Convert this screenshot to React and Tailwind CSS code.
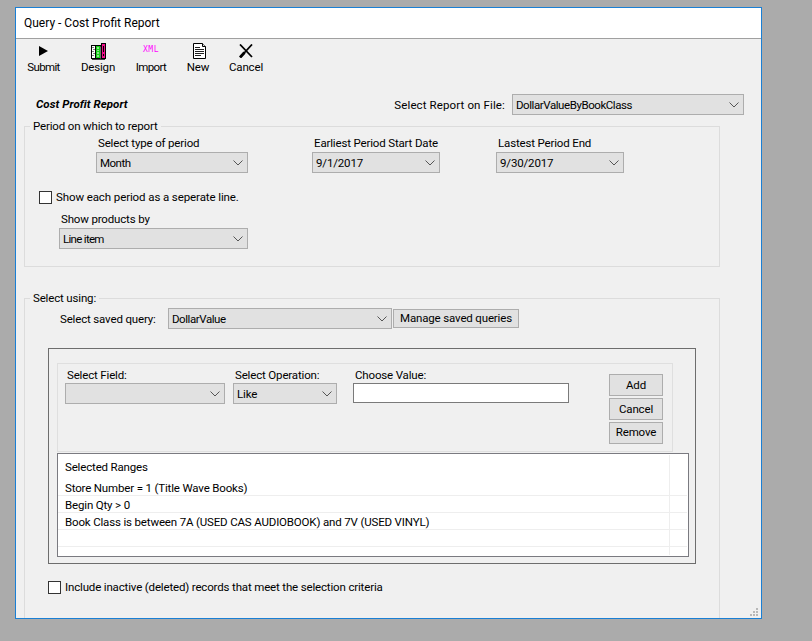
const FONT = "font-['Roboto',sans-serif]";

function Chevron() {
  return (
    <svg width="10" height="6" viewBox="0 0 10 6" className="shrink-0">
      <path d="M0.5 0.5 L5 5 L9.5 0.5" fill="none" stroke="#555" strokeWidth="1" />
    </svg>
  );
}

function Select({ value, className, textClass = "" }) {
  return (
    <div className={`h-[21px] shrink-0 flex items-center justify-between bg-[#e1e1e1] border border-[#adadad] pl-[3px] pr-[4px] ${className}`}>
      <span className={`whitespace-nowrap leading-[20px] ${textClass}`}>{value}</span>
      <Chevron />
    </div>
  );
}

function Checkbox() {
  return <div className="w-[13px] h-[13px] shrink-0 bg-white border border-[#333]" />;
}

function Btn({ children, className }) {
  return (
    <div className={`flex items-center justify-center bg-[#e1e1e1] border border-[#adadad] ${className}`}>{children}</div>
  );
}

function Legend({ children }) {
  return <div className="-mt-[9px] ml-[5px] h-[16px] w-fit px-[3px] bg-[#f0f0f0] leading-[17px]">{children}</div>;
}

function ToolItem({ icon, label, className, labelClass = "" }) {
  return (
    <div className={`flex flex-col items-center shrink-0 ${className}`}>
      <div className="h-[16px] mt-[4px] flex items-center justify-center">{icon}</div>
      <div className={`leading-[16px] h-[16px] ${labelClass}`}>{label}</div>
    </div>
  );
}

const PlayIcon = (
  <svg width="9" height="10" viewBox="0 0 9 10"><path d="M0 0 L9 5 L0 10 Z" fill="#000" /></svg>
);

const DesignIcon = (
  <svg width="15" height="17" viewBox="0 0 15 17">
    <rect x="0.5" y="2.5" width="4" height="13" fill="#fff" stroke="#000" />
    <path d="M2 4v1M3 6v1M2 8v1M3 10v1M2 12v1" stroke="#000" />
    <rect x="4.5" y="2.5" width="5" height="13" fill="#18d018" stroke="#000" />
    <path d="M6 5h2M7 7v1M6 10h2M7 12v2" stroke="#fff" />
    <rect x="9.5" y="3.5" width="1" height="12" fill="#ddd" />
    <rect x="10.5" y="0.5" width="4" height="15" fill="#f0108c" stroke="#000" />
    <path d="M12.5 3v6M12.5 11v2" stroke="#000" />
    <path d="M1 16.5h13" stroke="#444" />
  </svg>
);

const XmlIcon = (
  <span className="font-['DejaVu_Sans_Mono',monospace] text-[8px] leading-[8px] text-[#ff00ff] tracking-[0.6px] -mt-[2px]">XML</span>
);

const NewIcon = (
  <svg width="13" height="16" viewBox="0 0 13 16" className="ml-[3px]">
    <path d="M0.5 0.5 H9.5 L12.5 3.5 V15.5 H0.5 Z" fill="#fff" stroke="#000" />
    <path d="M9.5 0.5 V3.5 H12.5" fill="#ddd" stroke="#000" />
    <path d="M2 4.5 H7 M2 6.5 H11 M2 8.5 H11 M2 10.5 H11 M2 12.5 H8" stroke="#222" />
  </svg>
);

const CancelIcon = (
  <svg width="14" height="14" viewBox="0 0 14 14">
    <path d="M1 0.5 L13 13 M13 0.5 L1.5 13" stroke="#000" strokeWidth="1.8" fill="none" />
    <path d="M1 13.5 L5.5 8.5" stroke="#000" strokeWidth="2.8" />
  </svg>
);

function Field({ label, value, width, textClass = "", labelClass = "h-[18px] leading-[19px]" }) {
  return (
    <div className={`flex flex-col ${width}`}>
      <div className={`pl-[2px] whitespace-nowrap ${labelClass}`}>{label}</div>
      <Select value={value} className="w-full" textClass={textClass} />
    </div>
  );
}

function RangeRow({ children }) {
  return <div className="h-[17px] leading-[18px] border-b border-[#eeeeee] pl-[7px] mr-[1px] whitespace-nowrap">{children}</div>;
}

export default function App() {
  return (
    <div className={`w-[812px] h-[641px] bg-[#ababab] pt-[7px] pl-[15px] overflow-hidden text-[11.5px] tracking-[-0.16px] text-black ${FONT}`}>
      <div className="relative w-[747px] h-[612px] border border-[#1a7fd4] bg-[#f0f0f0] flex flex-col">
        <div className="h-[31px] shrink-0 bg-white border-b border-[#a0a0a0] pl-[8px] flex items-center text-[12px] tracking-normal">
          Query - Cost Profit Report
        </div>

        <div className="h-[46px] shrink-0 flex">
          <ToolItem icon={PlayIcon} label="Submit" className="w-[55px]" labelClass="tracking-[-0.65px]" />
          <ToolItem icon={DesignIcon} label="Design" className="w-[54px]" />
          <ToolItem icon={XmlIcon} label="Import" className="w-[52px]" labelClass="tracking-[-0.6px]" />
          <ToolItem icon={NewIcon} label="New" className="w-[42px]" />
          <ToolItem icon={CancelIcon} label="Cancel" className="w-[54px]" />
        </div>

        <div className="flex-1 min-h-0 flex flex-col ml-[8px] w-[720px]">
          <div className="mt-[9px] h-[21px] shrink-0 flex items-center">
            <span className="ml-[12px] font-bold italic text-[11.5px] tracking-[0.05px] leading-[23px]">Cost Profit Report</span>
            <span className="ml-auto mr-[7px] leading-[22px] tracking-[0.12px]">Select Report on File:</span>
            <Select value="DollarValueByBookClass" className="w-[232px]" textClass="tracking-[-0.43px]" />
          </div>

          <div className="mt-[11px] w-[696px] h-[141px] shrink-0 border border-[#dcdcdc] flex flex-col">
            <Legend>Period on which to report</Legend>
            <div className="flex pl-[71px]">
              <Field label="Select type of period" value="Month" width="w-[152px]" textClass="tracking-[-0.5px]" />
              <Field label="Earliest Period Start Date" value="9/1/2017" width="w-[128px] ml-[64px]" />
              <Field label="Lastest Period End" value="9/30/2017" width="w-[128px] ml-[56px]" />
            </div>
            <div className="mt-[18px] pl-[14px] h-[13px] flex items-center gap-[4px]">
              <Checkbox />
              <span className="tracking-[-0.1px]">Show each period as a seperate line.</span>
            </div>
            <div className="mt-[6px] pl-[34px]">
              <Field label="Show products by" value="Line item" width="w-[189px]" textClass="tracking-[-0.7px]" />
            </div>
          </div>

          <div className="mt-[31px] w-[696px] flex-1 min-h-0 border border-b-0 border-[#dcdcdc] flex flex-col">
            <Legend>Select using:</Legend>
            <div className="mt-[2px] h-[21px] pl-[35px] flex items-center shrink-0">
              <span className="w-[108px] leading-[22px]">Select saved query:</span>
              <Select value="DollarValue" className="w-[224px]" textClass="tracking-[-0.43px]" />
              <Btn className="ml-[1px] w-[126px] h-[19px] pt-px">Manage saved queries</Btn>
            </div>

            <div className="mt-[19px] ml-[23px] w-[648px] h-[216px] shrink-0 border border-[#6d6d6d] pl-[8px] pt-[14px]">
              <div className="w-[616px] h-[89px] border border-[#dfdfdf] flex pl-[7px] pt-[1px]">
                <Field label="Select Field:" value="" width="w-[160px]" labelClass="h-[18px] leading-[20px]" />
                <Field label="Select Operation:" value="Like" width="w-[104px] ml-[8px]" labelClass="h-[18px] leading-[20px]" />
                <div className="flex flex-col w-[216px] ml-[16px]">
                  <div className="h-[18px] leading-[20px] pl-[2px]">Choose Value:</div>
                  <div className="h-[20px] bg-white border border-[#7a7a7a]" />
                </div>
                <div className="ml-[40px] mt-[9px] w-[54px] flex flex-col gap-[2px]">
                  <Btn className="h-[22px] pt-px">Add</Btn>
                  <Btn className="h-[22px] pt-px">Cancel</Btn>
                  <Btn className="h-[22px]">Remove</Btn>
                </div>
              </div>
              <div className="relative mt-[1px] w-[632px] h-[104px] bg-white border border-[#7a7a80]">
                <div className="h-[25px] leading-[26px] pl-[7px]">Selected Ranges</div>
                <RangeRow>Store Number = 1 (Title Wave Books)</RangeRow>
                <RangeRow>Begin Qty &gt; 0</RangeRow>
                <RangeRow>Book Class is between 7A (USED CAS AUDIOBOOK) and 7V (USED VINYL)</RangeRow>
                <RangeRow />
                <div className="absolute left-[611px] top-[1px] bottom-[1px] w-px bg-[#eeeeee]" />
              </div>
            </div>

            <div className="mt-[17px] ml-[23px] h-[13px] flex items-center gap-[4px] shrink-0">
              <Checkbox />
              <span>Include inactive (deleted) records that meet the selection criteria</span>
            </div>
          </div>
        </div>

        <svg width="9" height="9" viewBox="0 0 9 9" className="absolute right-[2px] bottom-[1px]">
          <g fill="#b8b8b8">
            <rect x="6" y="0" width="2" height="2" />
            <rect x="3" y="3" width="2" height="2" />
            <rect x="6" y="3" width="2" height="2" />
            <rect x="0" y="6" width="2" height="2" />
            <rect x="3" y="6" width="2" height="2" />
            <rect x="6" y="6" width="2" height="2" />
          </g>
        </svg>
      </div>
    </div>
  );
}
